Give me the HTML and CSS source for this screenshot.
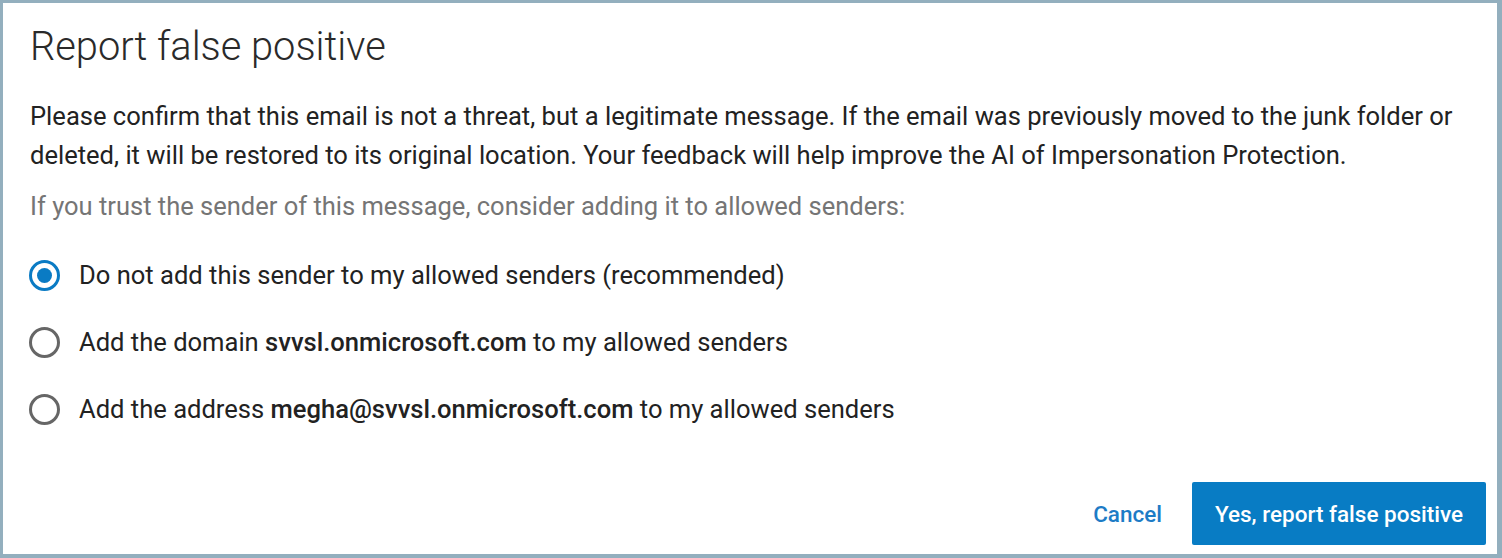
FILE: index.html
```html
<!DOCTYPE html>
<html lang="en">
<head>
<meta charset="utf-8">
<title>Report false positive</title>
<link rel="stylesheet" href="styles.css">
</head>
<body>
<div class="frame">
  <div class="dialog">
    <h1 class="title">Report false positive</h1>
    <p class="lead">Please confirm that this email is not a threat, but a legitimate message. If the email was previously moved to the junk folder or deleted, it will be restored to its original location. Your feedback will help improve the AI of Impersonation Protection.</p>
    <p class="hint">If you trust the sender of this message, consider adding it to allowed senders:</p>
    <div class="options">
      <label class="option">
        <input type="radio" name="allow" class="radio" checked>
        <span class="label">Do not add this sender to my allowed senders (recommended)</span>
      </label>
      <label class="option">
        <input type="radio" name="allow" class="radio">
        <span class="label">Add the domain <b>svvsl.onmicrosoft.com</b> to my allowed senders</span>
      </label>
      <label class="option">
        <input type="radio" name="allow" class="radio">
        <span class="label">Add the address <b>megha@svvsl.onmicrosoft.com</b> to my allowed senders</span>
      </label>
    </div>
    <div class="footer">
      <button class="btn btn-link" type="button">Cancel</button>
      <button class="btn btn-primary" type="button">Yes, report false positive</button>
    </div>
  </div>
</div>
</body>
</html>
```

FILE: styles.css
```css
* { box-sizing: border-box; }
html, body { margin: 0; padding: 0; background: #93afbe; }
body { font-family: Roboto, "Noto Sans", "Liberation Sans", sans-serif; color: #222; }

.frame {
  width: 1502px;
  height: 558px;
  border-style: solid;
  border-color: #93afbe;
  border-width: 3px 5px 4px 3px;
  background: #fff;
}

.dialog {
  height: 100%;
  display: flex;
  flex-direction: column;
  padding: 20px 11px 9px 27px;
}

.title {
  margin: 0;
  font-size: 39.8px;
  font-weight: 300;
  line-height: 47px;
  color: #2a2a2a;
}

.lead {
  margin: 27px 16px 0 0;
  font-size: 25.55px;
  line-height: 39px;
  color: #222;
}

.hint {
  margin: 12px 0 0 0;
  font-size: 25.5px;
  line-height: 39px;
  color: #757575;
}

.options {
  margin-top: 15.75px;
  display: flex;
  flex-direction: column;
}

.option {
  height: 67px;
  display: flex;
  align-items: center;
  gap: 19px;
  font-size: 25.55px;
  line-height: 30px;
  color: #222;
  cursor: pointer;
}

.option b { font-weight: 500; }

.radio {
  appearance: none;
  -webkit-appearance: none;
  margin: 0 0 0 -1px;
  width: 31px;
  height: 31px;
  border: 3px solid #666;
  border-radius: 50%;
  display: grid;
  place-items: center;
  flex: none;
}

.radio:checked { border-color: #0a7bc4; }
.radio:checked::before {
  content: "";
  width: 15px;
  height: 15px;
  border-radius: 50%;
  background: #0a7bc4;
}

.footer {
  margin-top: auto;
  display: flex;
  justify-content: flex-end;
  align-items: center;
  gap: 30px;
}

.btn {
  font-family: inherit;
  font-size: 22.5px;
  font-weight: 500;
  border: none;
  cursor: pointer;
}

.btn-link {
  background: none;
  color: #1d7cc6;
  padding: 0;
}

.btn-primary {
  width: 294px;
  height: 63px;
  background: #087cc4;
  color: #fff;
  border-radius: 2px;
}
```
